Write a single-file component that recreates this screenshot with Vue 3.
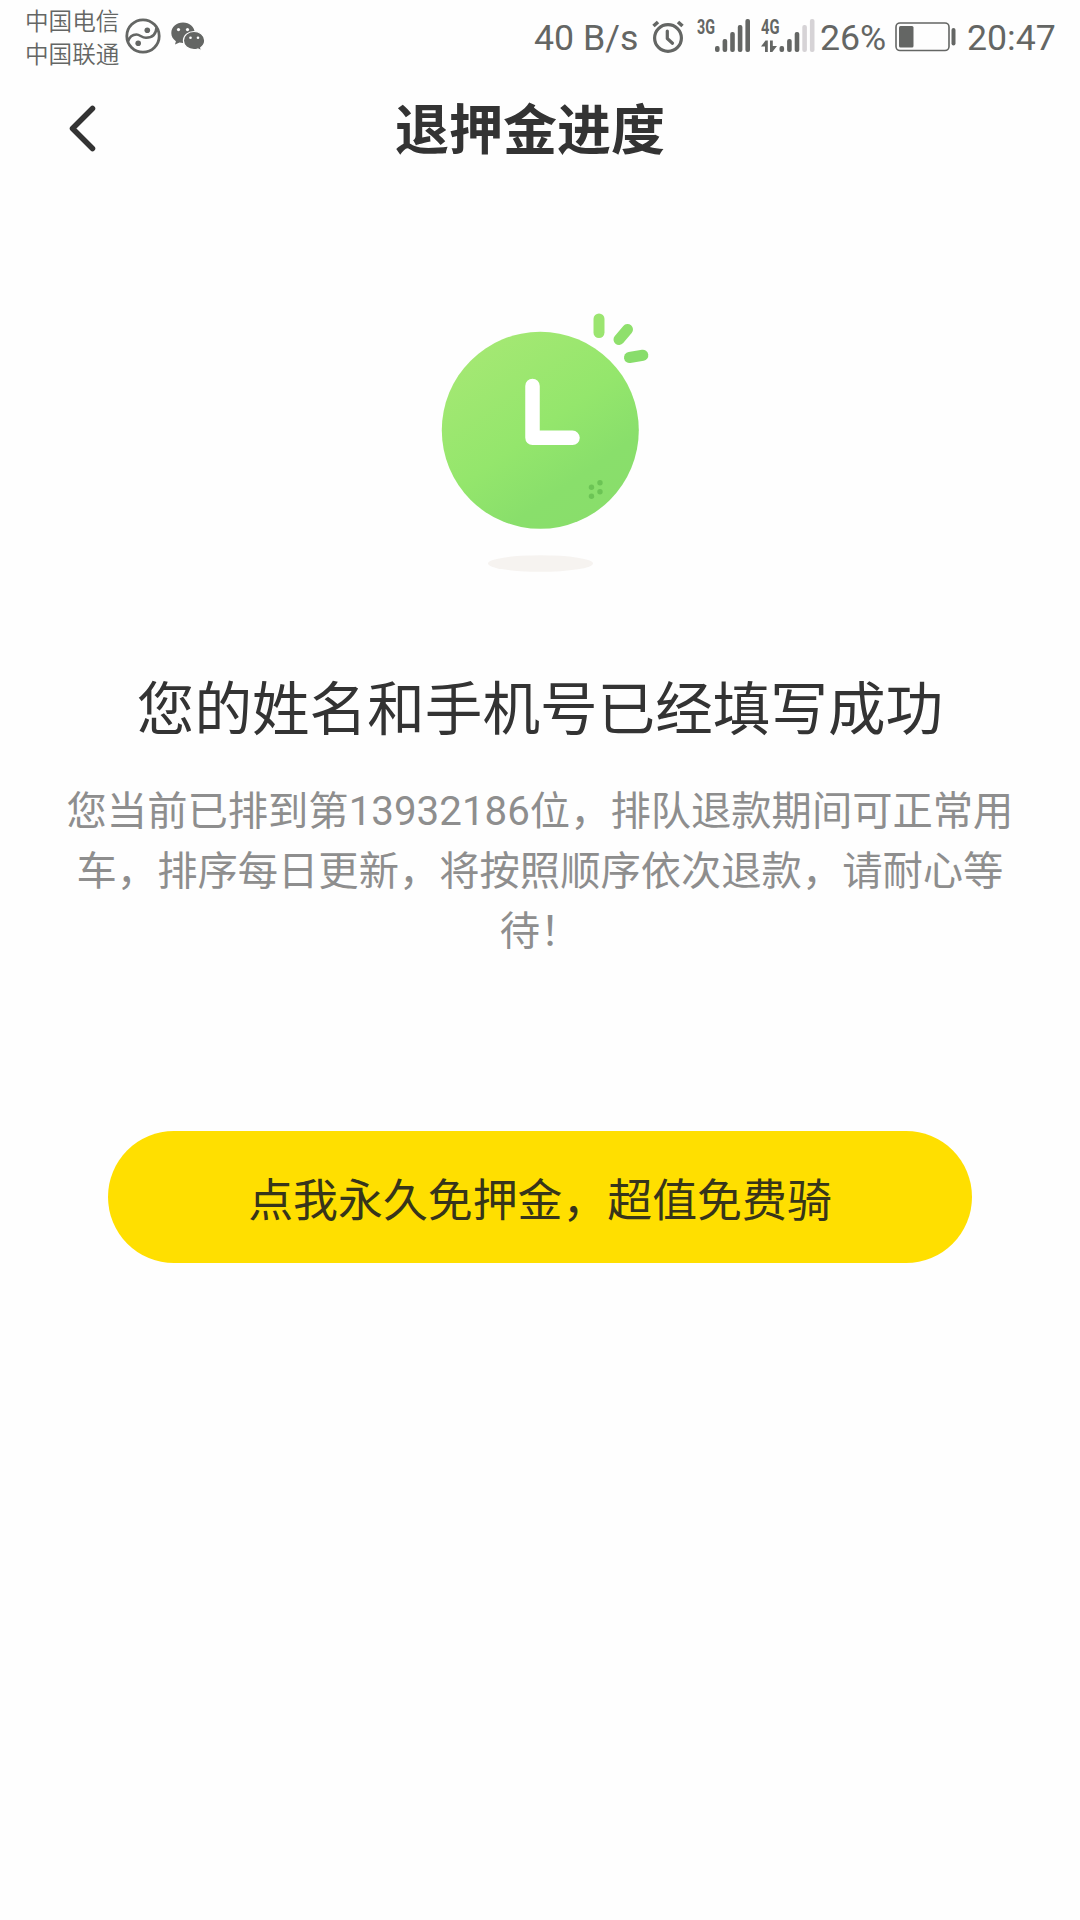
<script setup>
import { ref } from 'vue'

const speed = ref('40 B/s')
const battery = ref(26)
const time = ref('20:47')
const queueNo = ref(13932186)

const bars = [
  { x: 2, y: 46 },
  { x: 9.6, y: 39 },
  { x: 17.2, y: 32 },
  { x: 24.8, y: 25 },
  { x: 32.4, y: 19 },
]
</script>

<template>
  <div class="page">
    <div class="status-bar">
      <div class="carriers">
        <span>中国电信</span>
        <span>中国联通</span>
      </div>
      <svg class="icon-swirl" width="36" height="36" viewBox="0 0 36 36">
        <circle cx="18" cy="18" r="16.2" fill="none" stroke="#646664" stroke-width="2.8" />
        <path d="M3 23.500C4.500 18.500 8 16.500 11.500 16.500C15 16.500 16.500 19.800 21 19.800C26.500 19.800 31 17 31.500 9.500" fill="none" stroke="#646664" stroke-width="2.600" />
        <circle cx="22.3" cy="12.2" r="2.8" fill="#646664" />
        <circle cx="13.2" cy="25.3" r="2.8" fill="#646664" />
      </svg>
      <svg class="icon-wechat" width="34" height="30" viewBox="0 0 34 30">
        <path d="M12 .5C5.500.5.3 5 .3 11c0 3.500 1.800 6.300 4.600 8.200L4 22.600l4.500-2.200c1.200.3 2.300.5 3.500.5 6.500 0 11.700-4.500 11.700-10.100S18.500.5 12 .5z" fill="#646664" />
        <path d="M23 9.500c-5.900 0-10.600 4-10.600 9.100 0 5 4.700 9 10.600 9 1.300 0 2.600-.2 3.800-.6l3.800 1.900-.9-3.200c2.500-1.700 4-4.200 4-7.100 0-5.100-4.800-9.100-10.700-9.100z" fill="#646664" stroke="#fff" stroke-width="1.200" />
        <g fill="#fff">
          <circle cx="7.500" cy="7.600" r="1.600" />
          <circle cx="16.500" cy="7.600" r="1.600" />
          <circle cx="19.500" cy="15.800" r="1.300" />
          <circle cx="27" cy="15.800" r="1.300" />
        </g>
      </svg>

      <span class="speed">{{ speed }}</span>
      <svg class="icon-alarm" width="34" height="36" viewBox="0 0 34 36">
        <g fill="none" stroke="#646664" stroke-linecap="round">
          <circle cx="17" cy="20" r="13.400" stroke-width="3.200" />
          <path d="M2.500 8L7 4M31.500 8L27 4" stroke-width="3.600" stroke-linecap="butt" />
          <path d="M16.300 13v7.500l5.200 4.700" stroke-width="3.200" stroke-linejoin="round" />
        </g>
      </svg>
      <svg class="signal" width="54" height="56" viewBox="0 0 54 56">
        <text x="0" y="33.500" textLength="18" lengthAdjust="spacingAndGlyphs">3G</text>
        <g transform="translate(17.500 0)">
          <rect v-for="b in bars" :key="b.x" :x="b.x - 1.500" :y="b.y" width="4.600" :height="52 - b.y" rx="2" />
        </g>
      </svg>
      <svg class="signal second" width="54" height="56" viewBox="0 0 54 56">
        <text x="0" y="33.500" textLength="18.500" lengthAdjust="spacingAndGlyphs">4G</text>
        <path d="M0 46.500L4.500 40.500h2.300V52H4v-5.500zM9 40.500h2.800v5.500H16L11.300 52H9z" />
        <g transform="translate(18 0)">
          <rect
            v-for="(b, i) in bars"
            :key="b.x"
            :class="{ off: i > 2 }"
            :x="b.x - 1.500"
            :y="b.y"
            width="4.600"
            :height="52 - b.y"
            rx="2"
          />
        </g>
      </svg>
      <span class="percent">{{ battery }}%</span>
      <svg class="icon-battery" width="62" height="30" viewBox="0 0 62 30">
        <rect x="1" y="1" width="53" height="27.500" rx="4" fill="none" stroke="#646664" stroke-width="1.600" />
        <rect x="4" y="4" width="14.500" height="21.500" rx="1.500" fill="#646664" />
        <rect x="56.500" y="6" width="4" height="17.500" rx="2" fill="#646664" />
      </svg>
      <span class="time">{{ time }}</span>
    </div>

    <header class="nav">
      <button class="back" type="button">
        <svg width="28" height="48" viewBox="0 0 28 48">
          <path d="M23.500 3.500L3.500 23.500 23.500 43.500" fill="none" stroke="#333" stroke-width="5.500" stroke-linecap="round" stroke-linejoin="round" />
        </svg>
      </button>
      <h1>退押金进度</h1>
    </header>

    <main class="content">
      <svg class="clock" width="250" height="300" viewBox="0 0 250 300">
        <defs>
          <linearGradient id="face" x1="0.150" y1="0.100" x2="0.750" y2="0.950">
            <stop offset="0" stop-color="#a4e873" />
            <stop offset="0.500" stop-color="#94e66c" />
            <stop offset="0.800" stop-color="#89df6b" />
            <stop offset="1" stop-color="#89de6b" />
          </linearGradient>
        </defs>
        <ellipse cx="120.500" cy="273.500" rx="52.500" ry="8.300" fill="#f6f3f0" />
        <circle cx="120.300" cy="140.300" r="98.500" fill="url(#face)" />
        <path d="M112.500 96v51.800H152.500" fill="none" stroke="#fff" stroke-width="14.500" stroke-linecap="round" stroke-linejoin="round" />
        <g fill="none" stroke-width="11" stroke-linecap="round">
          <path d="M179 29v13.500" stroke="#9be570" />
          <path d="M207.500 39.500L199 49.500" stroke="#8fe06c" />
          <path d="M222.800 65.300L209.500 67.500" stroke="#88dd6b" />
        </g>
        <g fill="#6cc455">
          <circle cx="171.500" cy="197.300" r="2.700" />
          <circle cx="180" cy="192.700" r="2.700" />
          <circle cx="171.500" cy="206.200" r="2.700" />
          <circle cx="180" cy="201.700" r="2.700" />
        </g>
      </svg>

      <h2>您的姓名和手机号已经填写成功</h2>
      <p class="desc">
        您当前已排到第{{ queueNo }}位，排队退款期间可正常用<br />
        车，排序每日更新，将按照顺序依次退款，请耐心等<br />
        待！
      </p>
      <button class="cta" type="button">点我永久免押金，超值免费骑</button>
    </main>
  </div>
</template>

<style>
body {
  background: #fefefe;
}
</style>

<style scoped>
.page {
  width: 1080px;
  height: 1920px;
  overflow: hidden;
  background: #fefefe;
  color: #333;
  font-family: Roboto, 'Noto Sans CJK SC', sans-serif;
}

.status-bar {
  display: flex;
  align-items: flex-start;
  height: 72px;
  color: #646664;
  font-size: 35.7px;
  line-height: 42px;
  white-space: nowrap;
}

.status-bar svg {
  flex: none;
}

.carriers {
  display: flex;
  flex-direction: column;
  width: 100px;
  margin: 6px 0 0 25px;
  font-size: 23.6px;
  font-weight: 350;
  line-height: 33px;
}

.icon-swirl {
  margin-top: 18px;
}

.icon-wechat {
  margin: 22px 0 0 10px;
}

.speed {
  width: 116px;
  margin: 17px 0 0 329px;
}

.icon-alarm {
  margin: 18px 0 0 1px;
}

.signal {
  margin-left: 12px;
  fill: #646664;
}

.signal.second {
  margin-left: 10px;
}

.signal text {
  font-size: 20px;
  font-weight: 700;
}

.signal .off {
  fill: #d6d3d6;
}

.percent {
  width: 70px;
  margin: 17px 0 0 5px;
}

.icon-battery {
  margin: 22px 0 0 5px;
}

.time {
  margin: 17px 0 0 10px;
}

.nav {
  display: flex;
  align-items: center;
  height: 114px;
}

button {
  padding: 0;
  border: none;
  background: none;
  font-family: inherit;
  color: inherit;
}

.back {
  display: flex;
  width: 28px;
  margin-left: 69px;
}

h1 {
  margin: 6px 0 0 298px;
  font-size: 54px;
  font-weight: 700;
  line-height: 80px;
}

.content {
  display: flex;
  flex-direction: column;
  align-items: center;
}

.clock {
  margin-top: 104px;
  margin-right: -10px;
}

h2 {
  margin: 81px 0 0;
  font-size: 57.6px;
  font-weight: 400;
  line-height: 80px;
}

.desc {
  margin: 31px 0 0;
  color: #8e8e8e;
  font-size: 40.3px;
  line-height: 60px;
  text-align: center;
  white-space: nowrap;
}

.cta {
  width: 864px;
  height: 132px;
  margin-top: 169px;
  padding-top: 9px;
  border-radius: 66px;
  background: #ffdf00;
  color: #37351a;
  font-size: 44.9px;
  line-height: 123px;
}
</style>
